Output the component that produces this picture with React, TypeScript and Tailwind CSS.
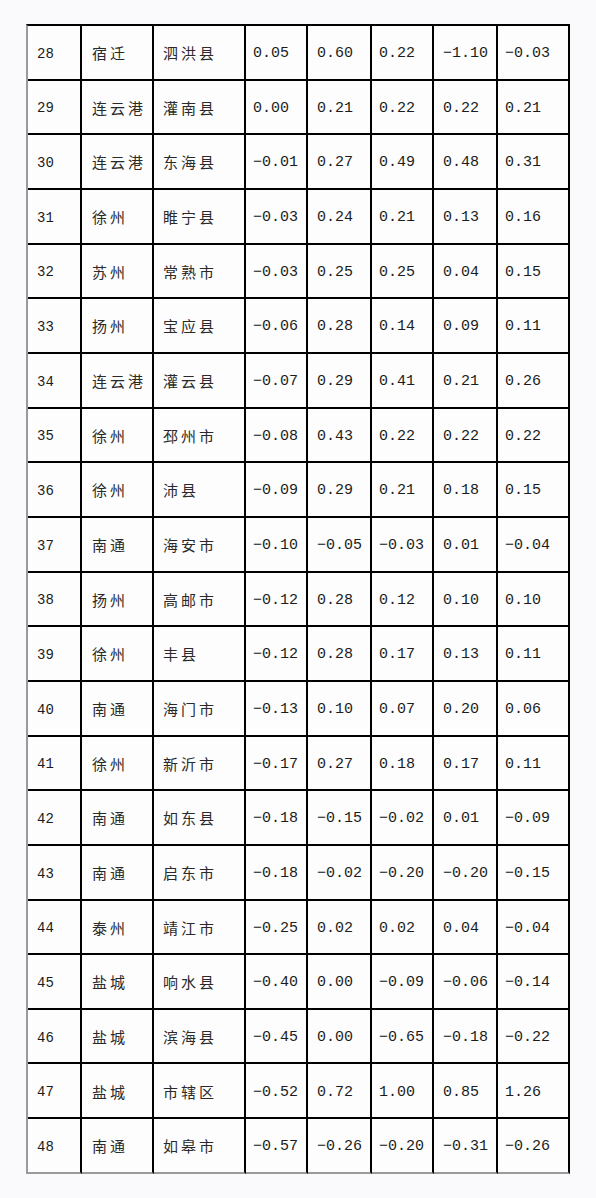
import React from "react";

const rows: string[][] = [
  ["28", "宿迁", "泗洪县", "0.05", "0.60", "0.22", "−1.10", "−0.03"],
  ["29", "连云港", "灌南县", "0.00", "0.21", "0.22", "0.22", "0.21"],
  ["30", "连云港", "东海县", "−0.01", "0.27", "0.49", "0.48", "0.31"],
  ["31", "徐州", "睢宁县", "−0.03", "0.24", "0.21", "0.13", "0.16"],
  ["32", "苏州", "常熟市", "−0.03", "0.25", "0.25", "0.04", "0.15"],
  ["33", "扬州", "宝应县", "−0.06", "0.28", "0.14", "0.09", "0.11"],
  ["34", "连云港", "灌云县", "−0.07", "0.29", "0.41", "0.21", "0.26"],
  ["35", "徐州", "邳州市", "−0.08", "0.43", "0.22", "0.22", "0.22"],
  ["36", "徐州", "沛县", "−0.09", "0.29", "0.21", "0.18", "0.15"],
  ["37", "南通", "海安市", "−0.10", "−0.05", "−0.03", "0.01", "−0.04"],
  ["38", "扬州", "高邮市", "−0.12", "0.28", "0.12", "0.10", "0.10"],
  ["39", "徐州", "丰县", "−0.12", "0.28", "0.17", "0.13", "0.11"],
  ["40", "南通", "海门市", "−0.13", "0.10", "0.07", "0.20", "0.06"],
  ["41", "徐州", "新沂市", "−0.17", "0.27", "0.18", "0.17", "0.11"],
  ["42", "南通", "如东县", "−0.18", "−0.15", "−0.02", "0.01", "−0.09"],
  ["43", "南通", "启东市", "−0.18", "−0.02", "−0.20", "−0.20", "−0.15"],
  ["44", "泰州", "靖江市", "−0.25", "0.02", "0.02", "0.04", "−0.04"],
  ["45", "盐城", "响水县", "−0.40", "0.00", "−0.09", "−0.06", "−0.14"],
  ["46", "盐城", "滨海县", "−0.45", "0.00", "−0.65", "−0.18", "−0.22"],
  ["47", "盐城", "市辖区", "−0.52", "0.72", "1.00", "0.85", "1.26"],
  ["48", "南通", "如皋市", "−0.57", "−0.26", "−0.20", "−0.31", "−0.26"],
];

const pads = ["pl-[9px]", "pl-[10px]", "pl-[9px]", "pl-[7px]", "pl-[9px]", "pl-[7px]", "pl-[9px]", "pl-[7px]"];

const mono = { fontFamily: '"Liberation Mono", "DejaVu Sans Mono", monospace' };
const cjk = { fontFamily: '"Noto Sans CJK SC", "Noto Sans", sans-serif' };

export default function App() {
  return (
    <div className="w-[596px] h-[1198px] bg-[#faf9fb] pt-[24px] pl-[26px]">
      <div className="w-[544px] grid grid-cols-[54px_72px_92px_62px_64px_62px_64px_72px] auto-rows-[54.667px] border-t-2 border-t-black border-l-2 border-l-[#9a9a9a] bg-[#fdfdfd] text-[#1c1c1c]">
        {rows.map((r, ri) =>
          r.map((c, ci) => {
            const last = ri === rows.length - 1;
            const isCjk = ci === 1 || ci === 2;
            return (
              <div
                key={ri + "-" + ci}
                className={
                  "flex items-center border-r-2 border-r-black border-b-2 " +
                  (last ? "border-b-[#9a9a9a] " : "border-b-black ") +
                  pads[ci] +
                  (isCjk
                    ? " pt-[2px] text-[15px] tracking-[3px] text-[#2a2a2a]"
                    : ci === 0
                    ? " pt-[4px] text-[14px]"
                    : " pt-[4px] text-[15px]")
                }
                style={isCjk ? cjk : mono}
              >
                {c}
              </div>
            );
          })
        )}
      </div>
    </div>
  );
}
